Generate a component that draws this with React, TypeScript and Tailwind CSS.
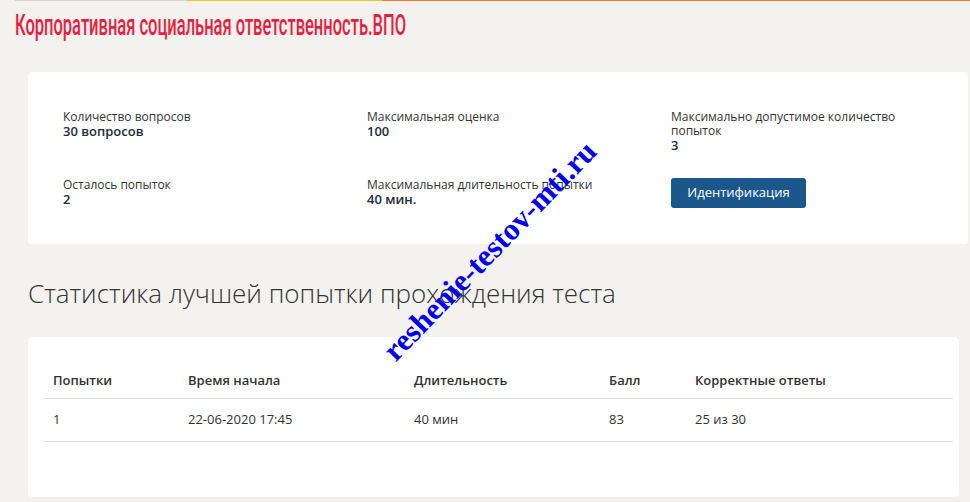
import React from 'react'

const info = [
  { label: 'Количество вопросов', value: '30 вопросов' },
  { label: 'Максимальная оценка', value: '100' },
  { label: 'Максимально допустимое количество попыток', value: '3' },
  { label: 'Осталось попыток', value: '2' },
  { label: 'Максимальная длительность попытки', value: '40 мин.' },
]

const cols = ['Попытки', 'Время начала', 'Длительность', 'Балл', 'Корректные ответы']
const row = ['1', '22-06-2020 17:45', '40 мин', '83', '25 из 30']
const widths = ['w-[135px]', 'w-[226px]', 'w-[195px]', 'w-[86px]', '']

const InfoItem = ({ label, value }: { label: string; value: string }) => (
  <div className="flex flex-col">
    <span className="text-[12px] leading-[14px] text-[#333]">{label}</span>
    <span className="text-[13px] leading-[14px] font-semibold text-[#1d2b3a]">{value}</span>
  </div>
)

export default function App() {
  return (
    <div
      className="relative h-[502px] w-[970px] overflow-hidden bg-[#f3f2ef]"
      style={{ fontFamily: '"Open Sans", "Noto Sans", sans-serif' }}
    >
      {/* top stripe */}
      <div className="ml-[15px] flex h-px">
        <div className="w-[172px] bg-[#d9d2cb]" />
        <div className="w-[195px] bg-[#f7c22a]" />
        <div className="flex-1 bg-[#f7792a]" />
      </div>

      <div className="mt-[6px] ml-[15px] h-[36px]">
        <h1
          className="inline-block origin-left scale-x-[0.55] whitespace-nowrap text-[30px] leading-[36px] font-medium text-[#e91e40]"
          style={{ fontFamily: 'Roboto, sans-serif' }}
        >
          Корпоративная социальная ответственность.ВПО
        </h1>
      </div>

      <div className="mt-[29px] ml-[28px] w-[940px] rounded-[4px] bg-white pt-[38px] pb-[36px] pl-[35px]">
        <div className="grid grid-cols-[304px_304px_232px] gap-y-[26px]">
          <InfoItem {...info[0]} />
          <InfoItem {...info[1]} />
          <InfoItem {...info[2]} />
          <InfoItem {...info[3]} />
          <InfoItem {...info[4]} />
          <div>
            <button className="h-[30px] w-[135px] rounded-[3px] bg-[#1b578c] text-[13px] text-white">
              Идентификация
            </button>
          </div>
        </div>
      </div>

      <h2 className="mt-[33px] ml-[28px] text-[26px] leading-[32px] font-light text-[#333]">
        Статистика лучшей попытки прохождения теста
      </h2>

      <div className="mt-[28px] ml-[28px] h-[160px] w-[931px] rounded-[4px] bg-white pt-[27px] pl-[15px] pr-[6px]">
        <table className="w-full border-collapse text-[13px] text-[#333]">
          <thead>
            <tr className="border-b border-[#e2e0dc]">
              {cols.map((c, i) => (
                <th key={c} className={`${widths[i]} h-[34px] px-[10px] text-left font-semibold`}>
                  {c}
                </th>
              ))}
            </tr>
          </thead>
          <tbody>
            <tr className="border-b border-[#e2e0dc]">
              {row.map((c, i) => (
                <td key={i} className="h-[43px] px-[10px] pt-[1px]">
                  {c}
                </td>
              ))}
            </tr>
          </tbody>
        </table>
      </div>

      {/* watermark */}
      <div
        className="absolute left-[490px] top-[251px] -translate-x-1/2 -translate-y-1/2 -rotate-[46deg] whitespace-nowrap text-[31px] font-bold text-[#0000f0]"
        style={{ fontFamily: '"Liberation Serif", serif' }}
      >
        reshenie-testov-mti.ru
      </div>
    </div>
  )
}
